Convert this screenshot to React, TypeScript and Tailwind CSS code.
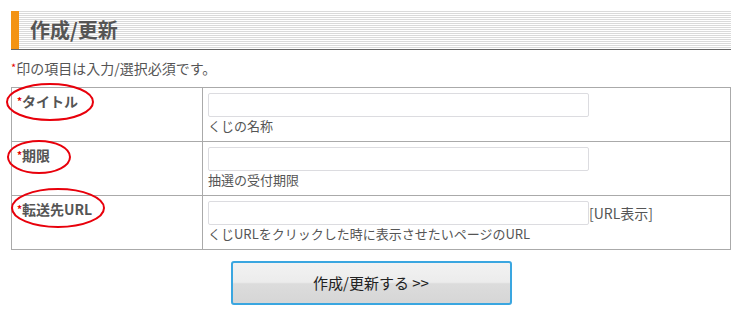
export default function App() {
  const rows = [
    { label: "タイトル", help: "くじの名称", extra: false },
    { label: "期限", help: "抽選の受付期限", extra: false },
    { label: "転送先URL", help: "くじURLをクリックした時に表示させたいページのURL", extra: true },
  ];

  return (
    <div
      className="relative w-[741px] h-[314px] bg-white pt-[11px] pl-[11px] text-[13px] text-[#555]"
      style={{ fontFamily: '"Noto Sans CJK JP", "Noto Sans", sans-serif' }}
    >
      <div className="w-[720px]">
        {/* heading */}
        <div className="flex h-[39px] border-b border-[#666] bg-[repeating-linear-gradient(to_bottom,#dadada_0px,#dadada_1px,#ffffff_1px,#ffffff_2px)]">
          <div className="w-[8px] bg-[#f39313]" />
          <h2 className="pl-[11px] text-[20px] font-bold leading-[38px] text-[#555]">作成/更新</h2>
        </div>

        <p className="mt-[8px] h-[18px] text-[14px] leading-[18px]">
          <span className="text-[11px] text-[#e60000] align-[2px]">*</span>印の項目は入力/選択必須です。
        </p>

        <table className="mt-[11px] w-[720px] border-collapse">
          <tbody>
            {rows.map((r) => (
              <tr key={r.label} className="h-[54px]">
                <td className="w-[191px] border border-[#aaa] align-top pl-[5px] pt-[4px] text-[14px] font-bold leading-[18px]">
                  <span className="text-[10px] text-[#e60000] align-[2px]">*</span>
                  {r.label}
                </td>
                <td className="border border-[#aaa] align-top pl-[5px] pt-[5px]">
                  <div className="flex items-center">
                    <div className="w-[381px] h-[24px] rounded-[2px] border border-[#dcdce0] bg-white" />
                    {r.extra && <span className="text-[14px] leading-[18px]">[URL表示]</span>}
                  </div>
                  <div className="leading-[18px]">{r.help}</div>
                </td>
              </tr>
            ))}
          </tbody>
        </table>

        <div className="mt-[11px] flex justify-center">
          <button className="w-[281px] h-[44px] rounded-[3px] border-2 border-[#3aa6e0] bg-[linear-gradient(to_bottom,#f2f2f2_0%,#ececec_48%,#dcdcdc_52%,#d6d6d6_100%)] text-[15px] text-[#222]">
            作成/更新する &gt;&gt;
          </button>
        </div>
      </div>

      {/* red annotation ellipses */}
      <svg className="pointer-events-none absolute left-0 top-0" width="741" height="314">
        <ellipse cx="50" cy="102" rx="43" ry="18" fill="none" stroke="#e8000b" strokeWidth="2" />
        <ellipse cx="39" cy="157" rx="31" ry="16" fill="none" stroke="#e8000b" strokeWidth="2" />
        <ellipse cx="58" cy="208" rx="46" ry="19" fill="none" stroke="#e8000b" strokeWidth="2" />
      </svg>
    </div>
  );
}
